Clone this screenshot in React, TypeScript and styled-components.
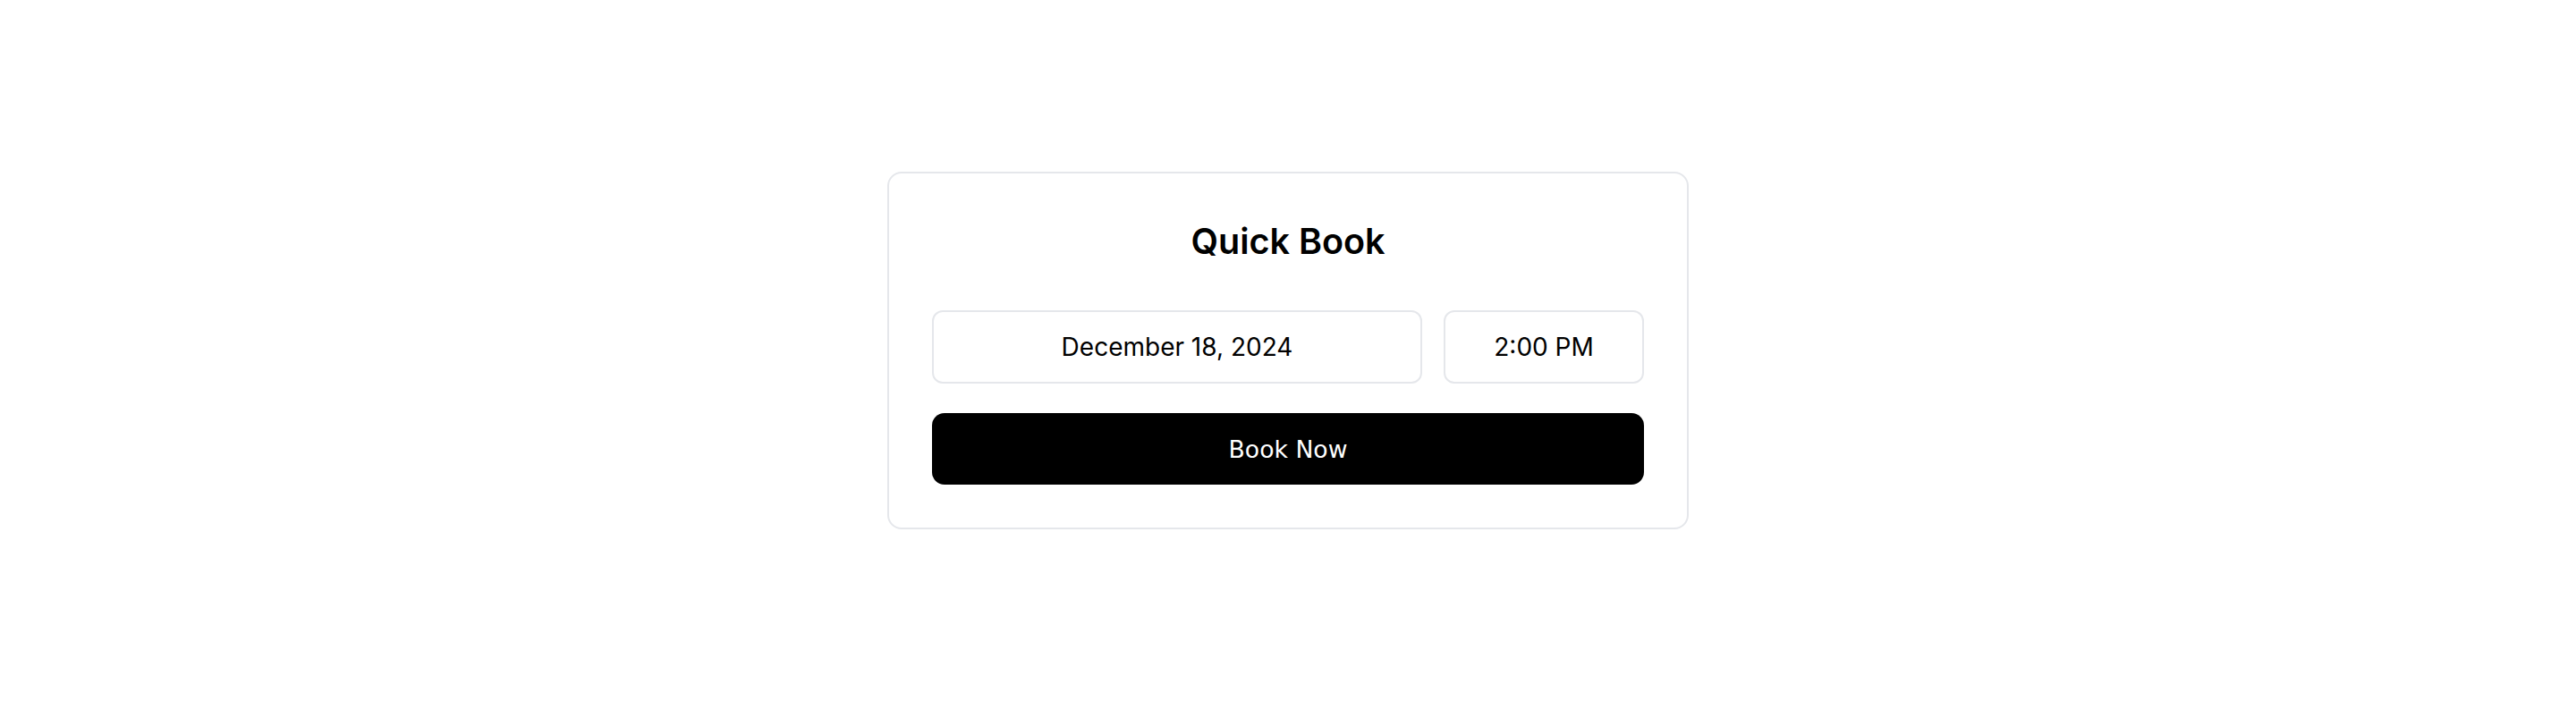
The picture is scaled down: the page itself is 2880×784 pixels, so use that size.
import React from "react";
import styled, { createGlobalStyle } from "styled-components";

const GlobalStyle = createGlobalStyle`
  html, body {
    margin: 0;
    padding: 0;
    background: #ffffff;
  }
  body {
    font-family: Inter, "Liberation Sans", sans-serif;
    color: #000000;
  }
`;

const Page = styled.div`
  display: flex;
  justify-content: center;
  align-items: flex-start;
  padding-top: 192px;
  min-height: 784px;
  box-sizing: border-box;
`;

const Card = styled.section`
  width: 896px;
  box-sizing: border-box;
  border: 2px solid #e5e7eb;
  border-radius: 16px;
  padding: 48px;
  display: flex;
  flex-direction: column;
  background: #ffffff;
`;

const Title = styled.h2`
  margin: 0 0 49px;
  font-family: Inter, "Liberation Sans", sans-serif;
  font-size: 39.5px;
  line-height: 56px;
  font-weight: 600;
  text-align: center;
  color: #000000;
`;

const FieldRow = styled.div`
  display: flex;
  gap: 24px;
  margin-bottom: 33px;
`;

const Field = styled.div<{ $width?: number }>`
  ${(p) => (p.$width ? `width: ${p.$width}px; flex: none;` : "flex: 1;")}
  height: 82px;
  box-sizing: border-box;
  border: 2px solid #e5e7eb;
  border-radius: 12px;
  display: flex;
  align-items: center;
  justify-content: center;
  font-family: Inter, "Liberation Sans", sans-serif;
  font-size: 28px;
  color: #000000;
`;

const BookButton = styled.button`
  height: 80px;
  border: none;
  border-radius: 14px;
  background: #000000;
  color: #ffffff;
  font-family: "DejaVu Sans", sans-serif;
  font-size: 26.67px;
  cursor: pointer;
  padding: 0;
`;

export default function App() {
  return (
    <>
      <GlobalStyle />
      <Page>
        <Card>
          <Title>Quick Book</Title>
          <FieldRow>
            <Field>December 18, 2024</Field>
            <Field $width={224}>2:00 PM</Field>
          </FieldRow>
          <BookButton>Book Now</BookButton>
        </Card>
      </Page>
    </>
  );
}
